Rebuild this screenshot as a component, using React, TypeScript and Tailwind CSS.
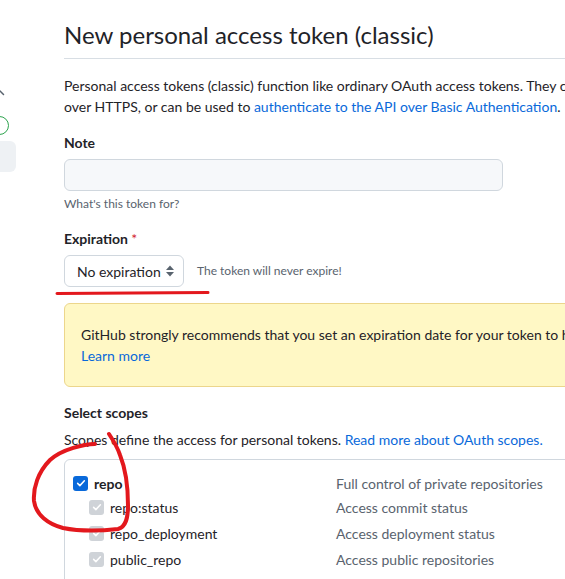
const Check = ({ className = '' }: { className?: string }) => (
  <svg className={className} viewBox="0 0 16 16" fill="none" stroke="currentColor" strokeWidth={2} strokeLinecap="round" strokeLinejoin="round">
    <path d="M3.5 8.5l3 3 6-6.5" />
  </svg>
);

const scopes = [
  { name: 'repo:status', desc: 'Access commit status' },
  { name: 'repo_deployment', desc: 'Access deployment status' },
  { name: 'public_repo', desc: 'Access public repositories' },
];

export default function App() {
  return (
    <div className="relative w-[565px] h-[579px] overflow-hidden bg-white text-[#1f2328] font-['Lato',sans-serif] text-[14px] leading-[21px]">
      <div className="flex">
        {/* Sidebar (cut off on the left) */}
        <div className="w-[16px] shrink-0 overflow-hidden pt-[84px]">
          <svg className="w-[16px] h-[16px] -ml-[9px]" viewBox="0 0 16 16" fill="none" stroke="#59636e" strokeWidth={1.5} strokeLinecap="round">
            <path d="M3.5 10.5L8 6l4.5 4.5" />
          </svg>
          <div className="mt-[16px] -ml-[10px] w-[19px] h-[19px] rounded-full border-[1.5px] border-[#2da44e]"></div>
          <div className="mt-[6px] -ml-[10px] w-[26px] h-[31px] rounded-[6px] bg-[#eef1f4]"></div>
        </div>

        {/* Main */}
        <div className="ml-[48px] w-[720px] shrink-0">
          <div className="pt-[17px] pb-[5px] border-b border-[#d8dee4]">
            <h1 className="text-[24px] leading-[36px] font-normal">New personal access token (classic)</h1>
          </div>

          <p className="mt-[16px] whitespace-nowrap">
            Personal access tokens (classic) function like ordinary OAuth access tokens. They can be used instead of a password for Git
            <br />
            over HTTPS, or can be used to <span className="text-[#0969da]">authenticate to the API over Basic Authentication</span>.
          </p>

          <div className="mt-[15px] font-bold">Note</div>
          <div className="mt-[6px] w-[439px] h-[32px] rounded-[6px] border border-[#d0d7de] bg-[#f6f8fa]"></div>
          <div className="mt-[4px] text-[12px] leading-[18px] text-[#59636e]">What's this token for?</div>

          <div className="mt-[15px] font-bold">
            Expiration <span className="text-[#d1242f] font-normal">*</span>
          </div>
          <div className="mt-[6px] flex items-center gap-[13px]">
            <div className="w-[120px] h-[32px] rounded-[6px] border border-[#d0d7de] bg-white flex items-center pl-[12px] pr-[8px] justify-between">
              <span>No expiration</span>
              <svg className="w-[10px] h-[14px]" viewBox="0 0 10 14" fill="#59636e">
                <path d="M5 1.5L9 6H1z" />
                <path d="M5 12.5L9 8H1z" />
              </svg>
            </div>
            <span className="text-[12px] leading-[18px] text-[#59636e]">The token will never expire!</span>
          </div>

          <div className="mt-[16px] rounded-[6px] border border-[#ecd68c] bg-[#fff8c5] px-[16px] py-[20px] whitespace-nowrap">
            GitHub strongly recommends that you set an expiration date for your token to help keep your information secure.
            <br />
            <span className="text-[#0969da]">Learn more</span>
          </div>

          <div className="mt-[15px] font-bold">Select scopes</div>
          <p className="mt-[6px] whitespace-nowrap">
            Scopes define the access for personal tokens. <span className="text-[#0969da]">Read more about OAuth scopes.</span>
          </p>

          <div className="mt-[9px] rounded-[6px] border border-[#d0d7de] pt-[12px] pl-[8px]">
            <div className="flex items-center h-[22px]">
              <div className="w-[272px] flex items-center gap-[6px]">
                <span className="w-[15px] h-[15px] rounded-[3px] bg-[#0969da] text-white flex items-center justify-center">
                  <Check className="w-[12px] h-[12px]" />
                </span>
                <span className="font-bold">repo</span>
              </div>
              <span className="ml-[-9px] text-[#59636e]">Full control of private repositories</span>
            </div>
            {scopes.map((s) => (
              <div key={s.name} className="flex items-center h-[26px] first:mt-[3px]">
                <div className="w-[272px] flex items-center gap-[6px] pl-[16px]">
                  <span className="w-[15px] h-[15px] rounded-[3px] bg-[#cfd3d8] text-white flex items-center justify-center">
                    <Check className="w-[12px] h-[12px]" />
                  </span>
                  <span>{s.name}</span>
                </div>
                <span className="ml-[-9px] text-[#59636e]">{s.desc}</span>
              </div>
            ))}
            <div className="h-[20px]"></div>
          </div>
        </div>
      </div>

      {/* Hand-drawn annotations */}
      <svg className="absolute left-0 top-0 pointer-events-none" width="565" height="579" viewBox="0 0 565 579" fill="none" stroke="#e3181d" strokeLinecap="round" strokeLinejoin="round">
        <path d="M57 293.5 L208 292.5" strokeWidth={3} />
        <path
          d="M95 444 C85 444 62 449 50 460 C38 472 33 488 34 501 C36 515 48 524 63 528 C78 531 100 531 118 529 C126 527 128 518 128 505 C128 490 126 470 120 455 C117 446 113 440 109 434"
          strokeWidth={4}
        />
      </svg>
    </div>
  );
}
